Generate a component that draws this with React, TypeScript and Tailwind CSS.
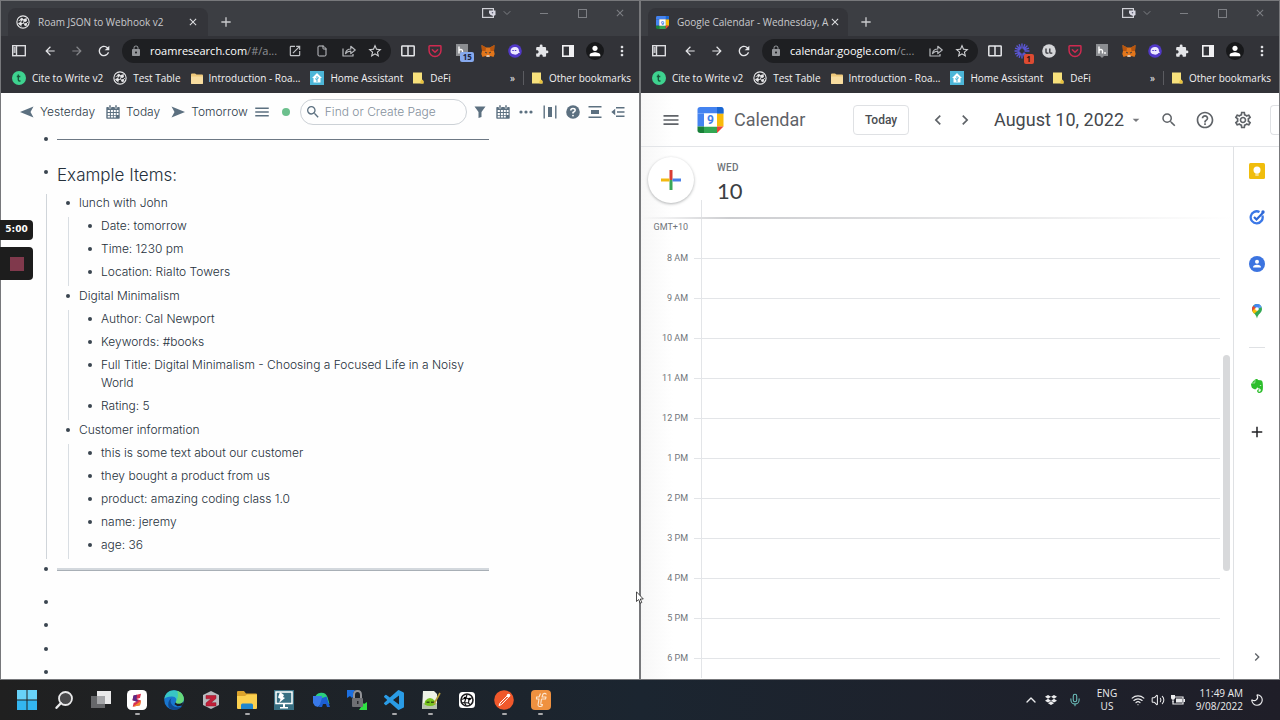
import React from "react";
import {
    MdExtension,
    MdPerson,
    MdLock,
    MdMoreVert,
    MdMenu,
    MdChevronLeft,
    MdChevronRight,
    MdArrowDropDown,
    MdSearch,
    MdHelpOutline,
    MdOutlineSettings,
    MdArrowBack,
    MdArrowForward,
    MdRefresh,
    MdAdd,
    MdClose,
    MdOpenInNew,
    MdStarBorder,
} from "react-icons/md";
import { FaDropbox, FaEvernote } from "react-icons/fa";
import { ChevronDown, ChevronUp, File, Mic, Moon, Volume2, Wifi } from "lucide-react";

/* ---------- BROWSER ICONS ---------- */

const RoamIcon = ({ className = "h-4 w-4", ring = "#e8e8ea", ink = "#2a2b2f" }) => (
    <svg viewBox="0 0 16 16" className={className}>
        <circle cx="8" cy="8" r="7" fill={ink} stroke={ring} strokeWidth="1.3" />
        <g stroke={ring} strokeWidth="1" fill={ring}>
            <path d="M3 6.5 6.5 5 9.5 5.5 12.5 4M6.5 5 5 10 8.5 9.5 11 11M9.5 5.5 8.5 9.5M2.5 9.5 5 10 6 13M11 11 13.5 8" fill="none" />
            <circle cx="6.5" cy="5" r="1.2" />
            <circle cx="5" cy="10" r="1.4" />
            <circle cx="10.5" cy="6" r="1.5" />
            <circle cx="11" cy="11" r="1.2" />
        </g>
    </svg>
);

const CalendarLogo = ({ className = "h-4 w-4" }) => (
    <svg viewBox="0 0 28 28" className={className}>
        <path d="M3 0h22a3 3 0 0 1 3 3v4H0V3a3 3 0 0 1 3-3Z" fill="#4483f0" />
        <path d="M0 7h7v14H0Z" fill="#4483f0" />
        <path d="M21 7h7v14h-7Z" fill="#f9bb0a" />
        <path d="M7 21h14v7H7Z" fill="#33a753" />
        <path d="M0 21h7v7H3a3 3 0 0 1-3-3Z" fill="#188038" />
        <path d="M21 0h4a3 3 0 0 1 3 3v4h-7Z" fill="#1a67d2" />
        <path d="M21 21h7l-7 7Z" fill="#ea4335" />
        <path d="M7 7h14v14H7Z" fill="#fff" />
        <text x="14" y="18.500" textAnchor="middle" fontSize="13" fontWeight="700" fontFamily="Roboto" fill="#3f7de8">9</text>
    </svg>
);

const SidebarIcon = () => (
    <svg viewBox="0 0 14 12" className="h-3 w-3.5" fill="none" stroke="#dcdde0" strokeWidth="1.4">
        <rect x=".7" y=".7" width="12.600" height="10" />
        <path d="M4.500 1v9.500M1.500 3h2M1.500 5h2M1.500 7h2" />
    </svg>
);

const ShareIcon = () => (
    <svg viewBox="0 0 14 14" className="h-3.5 w-3.5" fill="none" stroke="#b7b9bd" strokeWidth="1.2" strokeLinejoin="round">
        <path d="M1 4.500V12h10v-2" />
        <path d="M3.500 9.500C4 6.500 6 5 8.800 5V2.300L13.200 6 8.800 9.600V7.200C6.500 7.200 5 7.800 3.500 9.500Z" />
    </svg>
);

const SplitIcon = () => (
    <svg viewBox="0 0 14 12" className="h-3 w-3.5" fill="none" stroke="#e6e7ea" strokeWidth="1.5">
        <rect x=".8" y="1" width="12.400" height="9.800" rx=".6" />
        <path d="M7 1v10" />
    </svg>
);

const PocketIcon = () => (
    <svg viewBox="0 0 16 16" className="h-3.5 w-3.5" fill="none" stroke="#cf2a50" strokeWidth="1.7" strokeLinecap="round" strokeLinejoin="round">
        <path d="M2 2h12a.8.8 0 0 1 .8.8V7.500a6.800 6.800 0 0 1-13.600 0V2.800A.8.8 0 0 1 2 2Z" />
        <path d="m5 6.500 3 3 3-3" />
    </svg>
);

const HypothesisIcon = () => (
    <svg viewBox="0 0 14 14" className="h-3.5 w-3.5">
        <path d="M1 0h12v12H9l-2 2-2-2H1Z" fill="#8b8d91" />
        <path d="M4 2.500v7M4 6.500c1-1.500 3.500-1.500 3.500 .5v2.500" stroke="#fff" strokeWidth="1.400" fill="none" />
        <circle cx="10" cy="9" r=".9" fill="#fff" />
    </svg>
);

const FoxIcon = () => (
    <svg viewBox="0 0 14 14" className="h-3.5 w-3.5">
        <path d="M.5 1 5 3.500h4L13.500 1l-.5 6 .7 3-1.200 3-3-1-1.200 1H5.700l-1.200-1-3 1L.3 10 1 7Z" fill="#e2761b" />
        <path d="M.5 1 5 3.500 4.500 7 1 7Z" fill="#b8560f" />
        <path d="M13.500 1 9 3.500 9.500 7l3.500 0Z" fill="#b8560f" />
        <path d="M5.500 11h3v2h-3Z" fill="#d9c3b0" />
        <path d="m4 8 1.700.6-.3.7ZM10 8l-1.700.6.3.7Z" fill="#233447" stroke="#233447" strokeWidth=".4" />
    </svg>
);

const GhostIcon = () => (
    <svg viewBox="0 0 14 14" className="h-3.5 w-3.5">
        <circle cx="7" cy="7" r="6.800" fill="#5138c8" />
        <path d="M2.500 7.200C2.500 4.500 4.700 3 7.200 3.100c2.700.1 3.800 1.800 3.800 4.200l1 1.500-1.500.3C9.300 10.800 7 10.900 5.600 10.300 3.700 9.800 2.500 8.900 2.500 7.200Z" fill="#ece8ff" />
        <path d="M4.300 6.500h1.500M6.800 6.500h1.500" stroke="#5138c8" strokeWidth="1" />
    </svg>
);

const SidePanelIcon = () => (
    <svg viewBox="0 0 12 12" className="h-3 w-3">
        <rect x=".8" y=".8" width="10.400" height="10.400" fill="none" stroke="#f0f0f2" strokeWidth="1.600" />
        <path d="M7 0h5v12H7Z" fill="#f0f0f2" />
    </svg>
);

const BurstIcon = () => (
    <svg viewBox="0 0 16 16" className="h-4 w-4" stroke="#5b57d6" strokeWidth="1.400" strokeLinecap="round">
        <path d="M8 1v4M8 11v4M1 8h4M11 8h4M3 3l3 3M10 10l3 3M3 13l3-3M10 6l3-3M5.300 1.600l1.200 3.600M9.500 10.800l1.200 3.600M1.600 10.700l3.600-1.200M10.800 6.500l3.600-1.200M1.600 5.300l3.600 1.200M5.300 14.400l1.200-3.600M10.700 1.600 9.500 5.200" />
    </svg>
);

const LLIcon = () => (
    <svg viewBox="0 0 14 14" className="h-3.5 w-3.5">
        <circle cx="7" cy="7" r="6.800" fill="#d4d5d8" />
        <path d="M4 4.500v3.700q0 1 1 1h1.500M7.800 4.500v3.700q0 1 1 1h1.500" stroke="#303136" strokeWidth="1.300" fill="none" />
    </svg>
);

const WalletIcon = () => (
    <svg viewBox="0 0 14 10" className="h-2.5 w-3.5">
        <rect x=".6" y=".6" width="10.800" height="8.800" fill="none" stroke="#cfd0d6" strokeWidth="1.200" />
        <path d="M7 2.500h6.500v4.500l-2 1-3-1L7 5Z" fill="#d9d9e4" />
        <circle cx="10.500" cy="4.700" r=".8" fill="#55566a" />
    </svg>
);

const FolderIcon = () => (
    <svg viewBox="0 0 12 11" className="h-[11px] w-3">
        <path d="M0 1.500Q0 .5 1 .5h3l1.500 1H11q1 0 1 1V10q0 1-1 1H1q-1 0-1-1Z" fill="#efc97b" />
        <path d="M0 3.500h12V10q0 1-1 1H1q-1 0-1-1Z" fill="#f8dda0" />
    </svg>
);

const NoteFolderIcon = () => (
    <svg viewBox="0 0 11 12" className="h-3 w-[11px]">
        <path d="M0 .5h9v7l1.500 1.500v2.500H0Z" fill="#f7e17c" />
        <path d="M7.500 9 9 7.500l1.500 1.500v2.500h-3Z" fill="#e9c23f" />
    </svg>
);

const HomeAssistantIcon = () => (
    <svg viewBox="0 0 14 14" className="h-3.5 w-3.5">
        <path d="M0 0h14v14H0Z" fill="#4db6d8" />
        <path d="m7 2 5 5h-1.500v4.500h-7V7H2Z" fill="#fff" />
        <path d="M7 5v6M7 9 5 7.500M7 8l2-1.500" stroke="#4db6d8" fill="none" />
    </svg>
);

const CiteIcon = () => (
    <svg viewBox="0 0 14 14" className="h-3.5 w-3.5">
        <circle cx="7" cy="7" r="7" fill="#3ed28f" />
        <path d="M6.300 3.500v5.300q0 1.200 1.200 1.200h1M4.800 5.500h3.500" stroke="#17573a" strokeWidth="1.300" fill="none" />
    </svg>
);

/* ---------- BROWSER CHROME ---------- */

interface IconButtonProps {
    label: string;
    className?: string;
    children: React.ReactNode;
}

const IconButton: React.FC<IconButtonProps> = ({ label, className = "", children }) => (
    <button aria-label={label} className={"relative flex shrink-0 items-center justify-center " + className}>
        {children}
    </button>
);

interface BookmarkProps {
    icon: React.ReactNode;
    label: string;
}

const Bookmark: React.FC<BookmarkProps> = ({ icon, label }) => (
    <a href="#" className="flex shrink-0 items-center gap-1.5">
        {icon}
        <span>{label}</span>
    </a>
);

interface BrowserWindowProps {
    title: string;
    icon: React.ReactNode;
    host: string;
    path: string;
    roam?: boolean;
    children: React.ReactNode;
}

const BrowserWindow: React.FC<BrowserWindowProps> = ({ title, icon, host, path, roam = false, children }) => {
    return (
        <section className="flex min-w-0 flex-1 flex-col overflow-hidden border border-[#77787b] bg-white">
            {/* TABS */}
            <div className="flex h-[35px] shrink-0 items-end bg-[#3c3e43] pl-[7px] font-['Open_Sans',sans-serif] text-[10px] text-[#c9cacd]">
                <div className="flex h-7 w-[200px] items-center rounded-t-lg bg-[#34353a] pr-2 pl-2">
                    {icon}
                    <span className="ml-2 flex-1 whitespace-nowrap">{title}</span>
                    <IconButton label="Close tab" className="w-3.5">
                        <MdClose className="h-3 w-3 text-[#dedfe1]" />
                    </IconButton>
                </div>
                <IconButton label="New tab" className="ml-2.5 h-7 w-4">
                    <MdAdd className="h-4 w-4" />
                </IconButton>
                <div className="flex h-full flex-1 items-start justify-end pt-1 text-[#7d7f84]">
                    <IconButton label="Wallet" className="h-4 w-5"><WalletIcon /></IconButton>
                    <IconButton label="Search tabs" className="h-4 w-4"><ChevronDown className="h-3 w-3" strokeWidth={2} /></IconButton>
                    <IconButton label="Minimize" className="ml-2.5 h-4 w-[38px]"><span className="h-px w-2 bg-[#7d7f84]" /></IconButton>
                    <IconButton label="Maximize" className="h-4 w-[38px]"><span className="h-[9px] w-[9px] border border-[#7d7f84]" /></IconButton>
                    <IconButton label="Close" className="h-4 w-[38px]"><MdClose className="h-3 w-3" /></IconButton>
                </div>
            </div>
            {/* TOOLBAR */}
            <div className="flex h-[30px] shrink-0 items-center bg-[#323338] pl-1 text-[#e4e5e8]">
                <IconButton label="Side bar" className="w-7"><SidebarIcon /></IconButton>
                <IconButton label="Back" className="ml-[3px] w-[27px]"><MdArrowBack className="h-3.5 w-3.5" /></IconButton>
                <IconButton label="Forward" className={roam ? "w-[27px] text-[#85868a]" : "w-[27px]"}><MdArrowForward className="h-3.5 w-3.5" /></IconButton>
                <IconButton label="Reload" className="w-[27px]"><MdRefresh className="h-4 w-4" /></IconButton>
                <div className="ml-[5px] flex h-6 min-w-0 flex-1 items-center rounded-full bg-[#1e1f22] pr-[3px] pl-2 font-['Open_Sans',sans-serif] text-[11px]">
                    <MdLock className="h-3 w-3 shrink-0 text-[#94969a]" />
                    <input aria-label="Address" defaultValue={host} className="ml-2 field-sizing-content shrink-0 bg-transparent text-white outline-none" />
                    <span className="flex-1 whitespace-nowrap text-[#909296]">{path}</span>
                    {roam && (
                        <>
                            <IconButton label="Open in app" className="w-[27px]"><MdOpenInNew className="h-3.5 w-3.5 text-[#c2c4c8]" /></IconButton>
                            <IconButton label="Page" className="w-[27px]"><File className="h-3 w-3 text-[#c2c4c8]" /></IconButton>
                        </>
                    )}
                    <IconButton label="Share" className="w-[27px]"><ShareIcon /></IconButton>
                    <IconButton label="Bookmark" className="w-[26px]"><MdStarBorder className="h-4 w-4 text-[#d2d3d6]" /></IconButton>
                </div>
                <div className={roam ? "mr-1 ml-1 flex w-60 *:flex-1" : "mr-1 ml-1 flex w-[293px] *:flex-1"}>
                    <IconButton label="Split"><SplitIcon /></IconButton>
                    {!roam && (
                        <>
                            <IconButton label="Loom">
                                <BurstIcon />
                                <span className="absolute top-3 left-[15px] flex h-2.5 w-2.5 items-center justify-center rounded-xs bg-[#dd4b32] font-['Open_Sans'] text-[8px] font-bold text-[#33140e]">1</span>
                            </IconButton>
                            <IconButton label="LL"><LLIcon /></IconButton>
                        </>
                    )}
                    <IconButton label="Pocket"><PocketIcon /></IconButton>
                    <IconButton label="Hypothesis">
                        <HypothesisIcon />
                        {roam && <span className="absolute top-2.5 left-3 flex h-2.5 w-3.5 items-center justify-center rounded-xs bg-[#86a9ee] font-['Open_Sans'] text-[8px] font-bold text-[#1a2440]">15</span>}
                    </IconButton>
                    <IconButton label="Fox wallet"><FoxIcon /></IconButton>
                    <IconButton label="Ghost"><GhostIcon /></IconButton>
                    <IconButton label="Extensions"><MdExtension className="h-3.5 w-3.5" /></IconButton>
                    <IconButton label="Side panel"><SidePanelIcon /></IconButton>
                    <IconButton label="Profile">
                        <span className="flex h-[18px] w-[18px] items-center justify-center rounded-full bg-[#17181a]">
                            <MdPerson className="h-4 w-4 text-white" />
                        </span>
                    </IconButton>
                    <IconButton label="Menu"><MdMoreVert className="h-4 w-4" /></IconButton>
                </div>
            </div>
            {/* BOOKMARKS */}
            <nav className="flex h-[27px] shrink-0 items-center gap-2.5 bg-[#323338] pb-[3px] pr-2 pl-[11px] font-['Open_Sans',sans-serif] text-[10px] text-[#f2f2f4]">
                <Bookmark icon={<CiteIcon />} label="Cite to Write v2" />
                <Bookmark icon={<RoamIcon className="h-3.5 w-3.5" />} label="Test Table" />
                <Bookmark icon={<FolderIcon />} label="Introduction - Roa..." />
                <Bookmark icon={<HomeAssistantIcon />} label="Home Assistant" />
                <Bookmark icon={<NoteFolderIcon />} label="DeFi" />
                <div className="flex flex-1 items-center justify-end gap-2">
                    <button>»</button>
                    <span className="h-3.5 w-px bg-[#5b5c61]" />
                    <Bookmark icon={<NoteFolderIcon />} label="Other bookmarks" />
                </div>
            </nav>
            {children}
        </section>
    );
};

/* ---------- ROAM ---------- */

const ArrowHead = ({ flip = false }) => (
    <svg viewBox="0 0 14 12" className={flip ? "h-3 w-3.5 rotate-180" : "h-3 w-3.5"}>
        <path d="M.5.5 14 6 .5 11.500 3.500 6Z" fill="#5c7080" />
    </svg>
);

const GridCalendarIcon = () => (
    <svg viewBox="0 0 14 14" className="h-3.5 w-3.5">
        <path d="M1 2h12q.7 0 .7.700V13q0 .7-.7.7H1q-.7 0-.7-.7V2.700Q.3 2 1 2Z" fill="#5c7080" />
        <path d="M3 0h2v3.200H3ZM9 0h2v3.200H9Z" fill="#5c7080" stroke="#fff" strokeWidth=".5" />
        <path d="M1.700 5h2.200v2H1.700ZM4.900 5h2v2h-2ZM7.800 5h2v2h-2ZM10.700 5h1.800v2h-1.800ZM1.700 7.900h2.200v2H1.700ZM4.900 7.900h2v2h-2ZM7.800 7.900h2v2h-2ZM10.700 7.900h1.800v2h-1.800ZM1.700 10.800h2.200v1.800H1.700ZM4.900 10.800h2v1.800h-2ZM7.800 10.800h2v1.800h-2Z" fill="#fff" />
    </svg>
);

interface Block {
    text: string;
    children?: Block[];
}

const blocks: Block[] = [
    {
        text: "lunch with John",
        children: [{ text: "Date: tomorrow" }, { text: "Time: 1230 pm" }, { text: "Location: Rialto Towers" }],
    },
    {
        text: "Digital Minimalism",
        children: [
            { text: "Author: Cal Newport" },
            { text: "Keywords: #books" },
            { text: "Full Title: Digital Minimalism - Choosing a Focused Life in a Noisy World" },
            { text: "Rating: 5" },
        ],
    },
    {
        text: "Customer information",
        children: [
            { text: "this is some text about our customer" },
            { text: "they bought a product from us" },
            { text: "product: amazing coding class 1.0" },
            { text: "name: jeremy" },
            { text: "age: 36" },
        ],
    },
];

const Bullet = () => (
    <span className="flex h-[18px] w-[22px] shrink-0 items-center justify-center">
        <span className="h-1 w-1 rounded-full bg-[#3a4550]" />
    </span>
);

const BlockItem: React.FC<{ block: Block }> = ({ block }) => (
    <li>
        <div className="flex pb-[5px]">
            <Bullet />
            <span>{block.text}</span>
        </div>
        {block.children && (
            <ul className="mb-px ml-[11px] border-l border-[#d9dee3] pl-2.5">
                {block.children.map((child) => (
                    <BlockItem key={child.text} block={child} />
                ))}
            </ul>
        )}
    </li>
);

const RoamPage = () => {
    return (
        <div className="flex min-h-0 flex-1 flex-col overflow-hidden bg-[#fefefe] font-['Inter',sans-serif] font-light text-[#25303b]">
            {/* TOP BAR */}
            <div className="flex h-[37px] shrink-0 items-center pl-[19px] text-[12px] text-[#2c3a48]">
                <button className="flex items-center gap-1.5"><ArrowHead flip />Yesterday</button>
                <button className="ml-[11px] flex items-center gap-1.5"><GridCalendarIcon />Today</button>
                <button className="ml-[11px] flex items-center gap-1.5"><ArrowHead />Tomorrow</button>
                <IconButton label="Menu" className="ml-1.5 w-4"><MdMenu className="h-[18px] w-[18px] shrink-0 text-[#5c7080]" /></IconButton>
                <span className="ml-3 h-2 w-2 shrink-0 rounded-full bg-[#6cc08d]" />
                <label className="ml-2.5 flex h-[26px] w-[167px] items-center gap-1 rounded-full border border-[#ccd1d6] pl-1">
                    <MdSearch className="h-4 w-4 shrink-0 text-[#5c7080]" />
                    <input placeholder="Find or Create Page" className="min-w-0 flex-1 bg-transparent outline-none placeholder:text-[#84909c]" aria-label="Find or Create Page" />
                </label>
                <div className="ml-[5px] flex gap-2 text-[#5c7080]">
                    <IconButton label="Filter" className="h-4 w-4">
                        <svg viewBox="0 0 12 12" className="h-3 w-3"><path d="M.5.5h11L7.500 6v5l-3 1V6Z" fill="#5c7080" /></svg>
                    </IconButton>
                    <IconButton label="Calendar" className="h-4 w-3.5"><GridCalendarIcon /></IconButton>
                    <IconButton label="More" className="h-4 w-4">
                        <svg viewBox="0 0 14 4" className="h-1 w-3.5" fill="#5c7080"><circle cx="2" cy="2" r="1.600" /><circle cx="7" cy="2" r="1.600" /><circle cx="12" cy="2" r="1.600" /></svg>
                    </IconButton>
                    <IconButton label="Columns" className="h-4 w-4">
                        <svg viewBox="0 0 14 14" className="h-3.5 w-3.5" fill="#5c7080"><path d="M.5.5h1.400v13H.5ZM12.100.5h1.400v13h-1.400ZM5 2h4v10H5Z" /></svg>
                    </IconButton>
                    <IconButton label="Help" className="h-4 w-3.5">
                        <svg viewBox="0 0 14 14" className="h-3.5 w-3.5"><circle cx="7" cy="7" r="6.800" fill="#5c7080" /><path d="M4.800 5.500Q4.800 3.500 7 3.500t2.200 1.700Q9.200 6.300 7 7.500v1" stroke="#fff" strokeWidth="1.500" fill="none" /><circle cx="7" cy="10.600" r=".9" fill="#fff" /></svg>
                    </IconButton>
                    <IconButton label="Align" className="h-4 w-3.5">
                        <svg viewBox="0 0 14 14" className="h-3.5 w-3.5" fill="#5c7080"><path d="M.5 1h13v1.600H.5ZM3 5h8v4H3ZM.5 11.400h13V13H.5Z" /></svg>
                    </IconButton>
                    <IconButton label="Open sidebar" className="h-4 w-4">
                        <svg viewBox="0 0 14 12" className="h-3 w-3.5" fill="#5c7080"><path d="M5 1h8.500v1.500H5ZM6 5.200h7.500v1.500H6ZM5 9.500h8.500V11H5ZM4.200 2.800v6.400L.3 6Z" /></svg>
                    </IconButton>
                </div>
            </div>
            {/* PAGE CONTENT */}
            <div className="w-[488px] pl-[34px] text-xs leading-[18px]">
                <div className="flex h-[18px] items-center"><Bullet /><hr className="flex-1 border-[#6d7884]" /></div>
                <div className="mt-[3px] flex h-[43px] pt-3">
                    <Bullet />
                    <h2 className="text-[17px] leading-6">Example Items:</h2>
                </div>
                <ul className="ml-[11px] border-l border-[#d0d5da] pl-2.5">
                    {blocks.map((block) => (
                        <BlockItem key={block.text} block={block} />
                    ))}
                </ul>
                <div className="mt-px mb-[15px] flex h-[18px] items-center"><Bullet /><hr className="h-[3px] flex-1 border-b border-b-[#a8afb6] border-t-0 bg-[#d3d8dd]" /></div>
                <div className="h-[23px]"><Bullet /></div>
                <div className="h-6"><Bullet /></div>
                <div className="h-[23px]"><Bullet /></div>
                <div className="h-6"><Bullet /></div>
            </div>
        </div>
    );
};

/* ---------- GOOGLE CALENDAR ---------- */

const hours = ["8 AM", "9 AM", "10 AM", "11 AM", "12 PM", "1 PM", "2 PM", "3 PM", "4 PM", "5 PM", "6 PM"];

const SidePanel = () => (
    <aside className="flex w-[46px] shrink-0 flex-col items-center border-l border-[#dfe1e4]">
        <button aria-label="Keep" className="mt-4 h-4 w-4">
            <svg viewBox="0 0 16 16"><rect width="16" height="16" rx="1.500" fill="#f0bd0c" /><circle cx="8" cy="7" r="3.500" fill="#fff" /><path d="M6.300 8.500h3.400v2H6.300ZM6.300 11.400h3.400v1.200H6.300Z" fill="#fff" /></svg>
        </button>
        <button aria-label="Tasks" className="mt-[30px] h-4 w-4">
            <svg viewBox="0 0 16 16" fill="none"><path d="M13.400 6.500A6 6 0 1 1 10.500 3" stroke="#3b78e7" strokeWidth="2.300" /><path d="m5 8 2.500 2.500L14 3.800" stroke="#2e68d6" strokeWidth="2.200" /><circle cx="14" cy="3" r="1.700" fill="#2e68d6" /></svg>
        </button>
        <button aria-label="Contacts" className="mt-[31px] h-4 w-4">
            <svg viewBox="0 0 16 16"><circle cx="8" cy="8" r="8" fill="#3c74e0" /><circle cx="8" cy="5.700" r="2" fill="#fff" /><path d="M4 11.500q0-2.800 4-2.800t4 2.800Z" fill="#fff" /></svg>
        </button>
        <button aria-label="Maps" className="mt-[31px] h-4 w-4">
            <svg viewBox="0 0 16 16">
                <path d="M8 1a5 5 0 0 1 5 5c0 4-4 4.500-5 9.500C7 10.500 3 10 3 6a5 5 0 0 1 5-5Z" fill="#34a853" />
                <path d="M8 1a5 5 0 0 1 4.700 3.300L8 6Z" fill="#5b9bf5" />
                <path d="M4.200 2.800A5 5 0 0 1 8 1l3 .9L8 6Z" fill="#4285f4" />
                <path d="M4.200 2.800 8 6 3.300 8A5 5 0 0 1 4.200 2.800Z" fill="#ea4335" />
                <path d="m3.300 8 2.900-3L9 7.500l-3.800 3.300Q3.800 9.500 3.300 8Z" fill="#fbbc04" />
                <circle cx="8" cy="6" r="1.800" fill="#fff" />
            </svg>
        </button>
        <span className="mt-7 h-px w-4 bg-[#dfe1e4]" />
        <IconButton label="Evernote" className="mt-[30px] h-4 w-4"><FaEvernote className="h-4 w-4 text-[#2dbe2c]" /></IconButton>
        <IconButton label="Get add-ons" className="mt-[30px] h-4 w-4"><MdAdd className="h-[18px] w-[18px] shrink-0 text-[#202124]" /></IconButton>
        <IconButton label="Hide side panel" className="mt-auto mb-3.5 h-4 w-4"><MdChevronRight className="h-4 w-4 text-[#5f6368]" /></IconButton>
    </aside>
);

const CalendarPage = () => {
    return (
        <div className="flex min-h-0 flex-1 flex-col bg-linear-to-r from-[#f7f7f7] to-white to-5% font-['Roboto',sans-serif] text-[#5f6368]">
            {/* HEADER */}
            <header className="flex h-[54px] shrink-0 items-center overflow-hidden border-b border-[#e3e5e8] pl-5">
                <IconButton label="Main menu" className="w-5"><MdMenu className="h-5 w-5" /></IconButton>
                <CalendarLogo className="ml-4 h-[26px] w-[27px]" />
                <span className="ml-2.5 text-lg">Calendar</span>
                <button className="ml-auto h-[30px] w-14 rounded border border-[#dfe1e4] bg-white text-xs font-medium text-[#4a4d51]">Today</button>
                <IconButton label="Previous day" className="ml-5 w-[18px]"><MdChevronLeft className="h-5 w-5 shrink-0" /></IconButton>
                <IconButton label="Next day" className="ml-[9px] w-[18px]"><MdChevronRight className="h-5 w-5 shrink-0" /></IconButton>
                <button className="ml-5 flex items-center gap-1 text-lg text-[#45484d]">
                    August 10, 2022
                    <MdArrowDropDown className="h-4 w-4 text-[#77797d]" />
                </button>
                <IconButton label="Search" className="ml-4 w-[18px]"><MdSearch className="h-[18px] w-[18px]" /></IconButton>
                <IconButton label="Support" className="ml-[18px] w-[18px]"><MdHelpOutline className="h-5 w-5 shrink-0" /></IconButton>
                <IconButton label="Settings" className="ml-5 w-[18px]"><MdOutlineSettings className="h-5 w-5 shrink-0" /></IconButton>
                <button aria-label="View" className="ml-[18px] h-[30px] w-[9px] rounded-l border border-r-0 border-[#dfe1e4]" />
            </header>
            <div className="flex min-h-0 flex-1">
                <div className="flex min-w-0 flex-1 flex-col overflow-hidden">
                    {/* DAY */}
                    <div className="flex h-[70px] shrink-0">
                        <div className="w-[60px] shrink-0 pt-2.5 pl-[7px]">
                            <button aria-label="Create" className="flex h-[46px] w-[46px] items-center justify-center rounded-full bg-white shadow-[0_1px_3px_rgba(60,64,67,0.4)]">
                                <svg viewBox="0 0 20 20" className="h-5 w-5"><path d="M8.500 0h3v10h-3Z" fill="#d93b33" /><path d="M8.500 10h3v10h-3Z" fill="#3aa757" /><path d="M0 8.500h8.500v3H0Z" fill="#f2b90f" /><path d="M11.500 8.500H20v3h-8.500Z" fill="#4a80e8" /></svg>
                            </button>
                        </div>
                        <div className="flex items-end"><span className="h-[17px] w-px bg-[#e3e5e8]" /></div>
                        <div className="pt-3 pl-[15px]">
                            <div className="text-[10px] leading-[18px] font-medium tracking-wide text-[#70757a]">WED</div>
                            <div className="font-['Lato',sans-serif] text-[22px] leading-7 text-[#3c4043]">10</div>
                        </div>
                    </div>
                    <div className="h-0.5 shrink-0 bg-linear-to-r from-transparent via-[#cccdd0] via-15% to-transparent" />
                    {/* TIME GRID */}
                    <div className="flex min-h-0 flex-1 overflow-hidden">
                        <div className="min-w-0 flex-1 text-[9px] text-[#70757a]">
                            <div className="flex h-[19px]">
                                <div className="w-[47px] text-right leading-4">GMT+10</div>
                                <div className="ml-[13px] w-px bg-[#e3e5e8]" />
                            </div>
                            <ol>
                                {hours.map((hour) => (
                                    <li key={hour} className="flex h-10">
                                        <span className="w-[47px] pt-3 text-right leading-4">{hour}</span>
                                        <span className="mt-5 ml-1.5 w-[7px] border-t border-[#e3e5e8]" />
                                        <span className="w-px bg-[#e3e5e8]" />
                                        <span className="mt-5 flex-1 border-t border-[#e3e5e8]" />
                                    </li>
                                ))}
                            </ol>
                        </div>
                        <div className="flex w-[13px] shrink-0 flex-col pt-[136px] pl-[3px]">
                            <span className="h-[216px] w-[7px] rounded-sm bg-[#d8d9db]" />
                        </div>
                    </div>
                </div>
                <SidePanel />
            </div>
        </div>
    );
};

/* ---------- TASKBAR ---------- */

const apps = [
    {
        name: "Start",
        open: false,
        art: <g><path d="M0 0h9.500v9.500H0ZM10.500 0H20v9.500h-9.500Z" fill="#68d2f8" /><path d="M0 10.500h9.500V20H0ZM10.500 10.500H20V20h-9.500Z" fill="#33b5ef" /></g>,
    },
    {
        name: "Search",
        open: false,
        art: <g stroke="#e9e9ea" fill="none"><circle cx="11.500" cy="8.500" r="6.500" strokeWidth="1.800" fill="#4a4a4c" /><path d="m6.800 13.200-4.300 4.600" strokeWidth="2.400" strokeLinecap="round" /></g>,
    },
    {
        name: "Task view",
        open: false,
        art: <g><path d="M6 1h14v13H6Z" fill="#e9e9ea" /><path d="M0 6h14v12H0Z" fill="#66676a" /><path d="M6 6h8v8H6Z" fill="#a4a5a8" /></g>,
    },
    {
        name: "Slides",
        open: true,
        art: <g><rect width="20" height="20" rx="4.500" fill="#fff" /><path d="M14 3.800 13 8 9.500 9l4.500 1.500-1 4.700-7.300 1.600 1-4 3.300-1-4.500-1.600L6.500 5.500Z" fill="#d9304f" /><path d="M6.500 5.500 5.500 10.200l4.500 1.600 1-1.500L9.500 9l.5-4.200Z" fill="#5b2a86" /><path d="m14 10.500-1 4.700-7.300 1.600 4.500-3Z" fill="#f08a2c" /></g>,
    },
    {
        name: "Edge",
        open: false,
        art: <g><circle cx="10" cy="10" r="9.800" fill="#1976cf" /><path d="M.3 9C1 3.500 5 .2 10 .2s9.800 3.800 9.800 8.800c0 3-2 4.800-5 4.800-2.300 0-3.400-.8-3-1.800 1.500-2 .3-5.500-3.800-5.500C4 6.500 1.200 7.500.3 9Z" fill="#38c6c4" /><path d="M13 .8c4 1.200 6.800 4.200 6.800 8.200 0 3-2 4.800-5 4.800-2.300 0-3.400-.8-3-1.800 2-3 3-8 1.200-11.200Z" fill="#67d879" /><path d="M7.500 8C5 12 8 17.500 14 17.200c2 0 3.500-.6 4.500-1.500C16 20 10 21 6 18.500 3 16 4 10 7.500 8Z" fill="#10498f" /><path d="M11.800 12c-.4 1 .7 1.800 3 1.800 1.800 0 3.300-.6 4.200-1.800l-.5 3.500-5 .8-3-2Z" fill="#1c1d22" /></g>,
    },
    {
        name: "Zotero",
        open: false,
        art: <g><path d="m10 1 8 4v10l-8 4-8-4V5Z" fill="#b9bbbf" /><path d="M5 5.500h10v3l-5 4.200h5V16H5v-3l5-4.200H5Z" fill="#c21f38" stroke="#8f1528" strokeWidth=".5" /></g>,
    },
    {
        name: "File Explorer",
        open: true,
        art: <g><path d="M0 2q0-1 1-1h6l2 2.500h10q1 0 1 1V8H0Z" fill="#dba32c" /><path d="M0 6h8l2-1.500h10V18q0 1-1 1H1q-1 0-1-1Z" fill="#fbd04f" /><path d="M4 19v-4q0-1.500 1.500-1.500h9q1.500 0 1.500 1.500v4Z" fill="#1f86cf" /></g>,
    },
    {
        name: "Remote monitor",
        open: false,
        art: <g><path d="M0 0h20v20H0Z" fill="#397083" /><path d="M2 2h16v11.500H2Z" fill="#397083" stroke="#fff" strokeWidth="1.500" /><path d="M9 13.500h2V17h3v1.500H6V17h3Z" fill="#fff" /><path d="m6 2 4 3-1 2 2 1-6 5 1.500-4L4 7.500Z" fill="#fff" /></g>,
    },
    {
        name: "Scanner",
        open: false,
        art: <g><path d="M4 8a6.500 6.500 0 0 1 12.500-1l2 7-4-1L10 9 6 11Z" fill="#2bd07f" /><path d="M2 6h9v7l-4 4-3-1-2-3Z" fill="#3979e8" /><path d="m11 8 4.500-1.500L19 17h-3l-1-3h-3l-1 3H8Z" fill="#1c5fd4" /></g>,
    },
    {
        name: "Secure transfer",
        open: false,
        art: <g><path d="M0 0h8L6 3l2 2-3 3-2-2-3 2Z" fill="#1c6fe0" /><path d="M20 20h-8l2-3-2-2 3-3 2 2 3-2Z" fill="#2fe043" /><path d="M7 9V5q0-4 3.500-4T14 5v4" fill="none" stroke="#929397" strokeWidth="2" /><rect x="5" y="8" width="11" height="9" rx="1" fill="#6f7074" /><path d="M10 11h1.500v3H10Z" fill="#28292c" /></g>,
    },
    {
        name: "VS Code",
        open: true,
        art: <path transform="scale(.833)" fill="#2a9ce6" d="M23.150 2.587L18.210.210a1.494 1.494 0 0 0-1.705.290l-9.460 8.630-4.120-3.128a.999.999 0 0 0-1.276.057L.327 7.261A1 1 0 0 0 .326 8.740L3.899 12 .326 15.260a1 1 0 0 0 .001 1.479L1.650 17.940a.999.999 0 0 0 1.276.057l4.120-3.128 9.460 8.630a1.492 1.492 0 0 0 1.704.290l4.942-2.377A1.500 1.500 0 0 0 24 20.060V3.939a1.500 1.500 0 0 0-.850-1.352zm-5.146 14.861L10.826 12l7.178-5.448v10.896z" />,
    },
    {
        name: "Notepad++",
        open: true,
        art: <g><path d="M2 1h11l3 3v15H1Z" fill="#eef3e6" /><path d="M2 13h14v6H1Z" fill="#b8c4ad" /><path d="M4 11q5-6 10 0l.5 3.500q-5.500 3-11 0Z" fill="#77c51d" /><path d="M5.500 11.500h3v1.500h-3ZM10 11.500h3V13h-3Z" fill="#30500e" /><path d="m19 3-6 11" stroke="#b9a23a" strokeWidth="1.600" /></g>,
    },
    {
        name: "Roam",
        open: false,
        art: <g><rect x="2" y="2" width="16" height="16" rx="3.500" fill="#fff" /><circle cx="10" cy="10" r="6" fill="none" stroke="#1d1d20" strokeWidth="1.600" /><path d="M4.500 9.500 9 8l3 1 4-1.500M9 8l-1.500 4.500 4 .5 2 2M12 9l-.5 4M5 13l2.500-.5L9 15.500M10 4.500 9 8" stroke="#1d1d20" strokeWidth="1.200" fill="none" /><circle cx="8" cy="8" r="1.300" /><circle cx="12.500" cy="9" r="1.300" /></g>,
    },
    {
        name: "Postman",
        open: true,
        art: <g><circle cx="10" cy="10" r="9.800" fill="#f0582b" /><path d="m5 15.500 1-2.500 7-7 1.500 1.300-7 7.200Z" fill="none" stroke="#fff" strokeWidth="1" /><circle cx="14.500" cy="5.500" r="1.800" fill="#fff" /></g>,
    },
    {
        name: "Text tool",
        open: true,
        art: <g><rect width="20" height="20" rx="4" fill="#ef9140" /><path d="M9.500 3.500 8 7H5.500v2H8l-1 6q.5 2.500 4 1l.5-1.500q-2 .5-1.700-.8L10.500 9h4l.5-2h-4l1-3q2-1.500 3.500.5" stroke="#fbe5cf" strokeWidth="1.100" fill="none" strokeLinejoin="round" /></g>,
    },
];

const Taskbar = () => {
    return (
        <footer className="flex h-10 shrink-0 items-center bg-linear-to-r from-[#202020] via-[#1b2530] to-[#1f1e28] pl-[9px] pr-[15px] text-[#ececee]">
            <div className="flex h-full w-[550px] *:flex-1">
                {apps.map((app) => (
                    <button key={app.name} aria-label={app.name} className="flex flex-col items-center pt-2.5">
                        <svg viewBox="0 0 20 20" className="h-5 w-5">{app.art}</svg>
                        {app.open && <span className="mt-[3px] h-0.5 w-[5px] rounded-full bg-[#a9a9ab]" />}
                    </button>
                ))}
            </div>
            {/* TRAY */}
            <div className="ml-auto flex items-center font-['Open_Sans',sans-serif] text-[10px] leading-[13px]">
                <IconButton label="Hidden icons" className="w-4"><ChevronUp className="h-4 w-4" strokeWidth={2} /></IconButton>
                <IconButton label="Dropbox" className="ml-1 w-4"><FaDropbox className="h-3 w-3" /></IconButton>
                <IconButton label="Microphone" className="ml-2 w-4"><Mic className="h-3.5 w-3.5 text-[#6fc4c0]" strokeWidth={1.75} /></IconButton>
                <button className="ml-2.5 w-7 text-center">ENG<br />US</button>
                <button aria-label="Network, sound and battery" className="ml-2.5 flex w-[54px] items-center justify-between">
                    <Wifi className="h-3.5 w-3.5" strokeWidth={2} />
                    <Volume2 className="h-3.5 w-3.5" strokeWidth={1.75} />
                    <svg viewBox="0 0 14 12" className="h-3 w-3.5"><path d="M4 3h8v7H2V7" fill="none" stroke="#ececee" strokeWidth="1.200" /><path d="M5 4.500h6v4H5ZM12.500 5H14v3h-1.500ZM0 1h4v3q0 1.500-2 1.500T0 4Z" fill="#ececee" /><path d="M2 5v3" stroke="#ececee" /></svg>
                </button>
                <button className="ml-2.5 w-12 text-right whitespace-nowrap">11:49 AM<br />9/08/2022</button>
                <IconButton label="Focus" className="ml-1.5 w-4"><Moon className="h-3.5 w-3.5 -scale-x-100" strokeWidth={2} /></IconButton>
            </div>
        </footer>
    );
};

const App = () => {
    return (
        <div className="relative flex h-screen flex-col overflow-hidden">
            <main className="flex min-h-0 flex-1">
                <BrowserWindow title="Roam JSON to Webhook v2" icon={<RoamIcon className="h-3.5 w-3.5 shrink-0" />} host="roamresearch.com" path="/#/a..." roam>
                    <RoamPage />
                </BrowserWindow>
                <BrowserWindow title="Google Calendar - Wednesday, A" icon={<CalendarLogo className="h-[13px] w-[13px] shrink-0" />} host="calendar.google.com" path="/c...">
                    <CalendarPage />
                </BrowserWindow>
            </main>
            <Taskbar />
            {/* RECORDER */}
            <div className="absolute top-[220px] left-0 flex flex-col gap-[7px]">
                <span className="flex h-5 w-[33px] items-center justify-center rounded-r bg-[#1d1d1d] font-['DejaVu_Sans',sans-serif] text-[9px] font-bold text-white">5:00</span>
                <button aria-label="Stop recording" className="flex h-[33px] w-[33px] items-center justify-center rounded-r bg-[#1d1d1d]">
                    <span className="h-3.5 w-3.5 bg-[#80394c]" />
                </button>
            </div>
            {/* POINTER */}
            <svg viewBox="0 0 8 13" className="absolute top-[591px] left-[636px] h-[13px] w-2">
                <path d="M.5.8v9.700l2.200-2 1.500 3.700 1.600-.7L4.300 8h3Z" fill="#fff" stroke="#222" strokeWidth=".8" />
            </svg>
        </div>
    );
};

export default App;
